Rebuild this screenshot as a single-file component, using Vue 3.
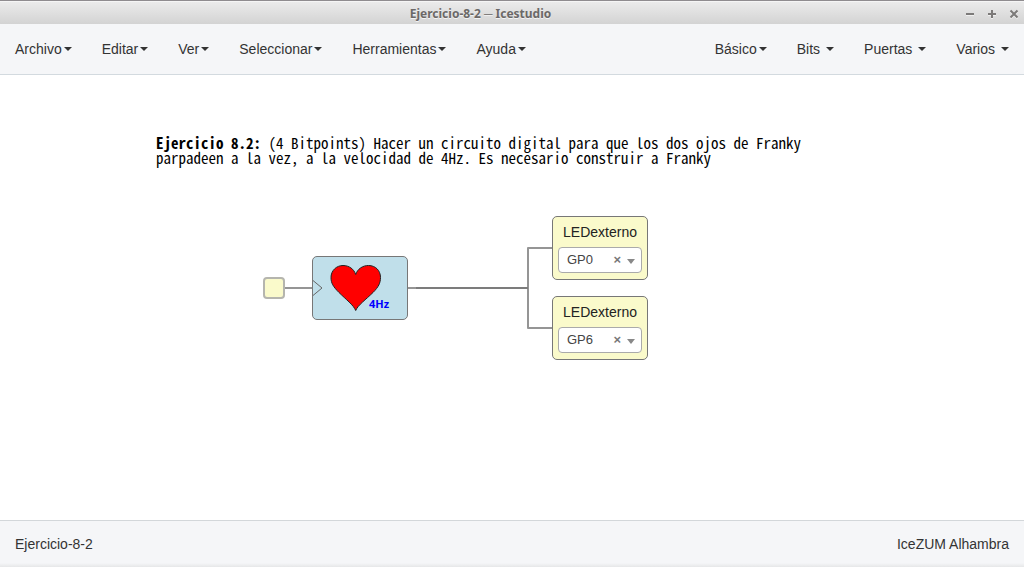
<script setup>
import { reactive } from 'vue'

const leftMenus = ['Archivo', 'Editar', 'Ver', 'Seleccionar', 'Herramientas', 'Ayuda']
const rightMenus = [
  { label: 'Básico', spaced: false },
  { label: 'Bits', spaced: true },
  { label: 'Puertas', spaced: true },
  { label: 'Varios', spaced: true },
]
const pins = ['GP0', 'GP1', 'GP2', 'GP3', 'GP4', 'GP5', 'GP6', 'GP7']
const leds = reactive([
  { id: 'led-a', name: 'LEDexterno', pin: 'GP0' },
  { id: 'led-b', name: 'LEDexterno', pin: 'GP6' },
])
</script>

<template>
  <div class="window">
    <header class="titlebar">
      <h1 class="title">Ejercicio-8-2 ─ Icestudio</h1>
      <div class="controls">
        <button type="button" aria-label="Minimizar">
          <svg viewBox="0 0 10 10"><path d="M1 5H9" /></svg>
        </button>
        <button type="button" aria-label="Maximizar">
          <svg viewBox="0 0 10 10"><path d="M1 5H9M5 1V9" /></svg>
        </button>
        <button type="button" aria-label="Cerrar">
          <svg viewBox="0 0 10 10"><path d="M1.5 1.5L8.5 8.5M8.5 1.5L1.5 8.5" /></svg>
        </button>
      </div>
    </header>

    <nav class="navbar">
      <div class="menus">
        <button v-for="m in leftMenus" :key="m" type="button" class="menu">
          {{ m }}<span class="caret"></span>
        </button>
      </div>
      <div class="menus">
        <button v-for="m in rightMenus" :key="m.label" type="button" class="menu" :class="{ spaced: m.spaced }">
          {{ m.label }}<span class="caret"></span>
        </button>
      </div>
    </nav>

    <main class="canvas">
      <p class="note">
        <b>Ejercicio 8.2:</b> (4 Bitpoints) Hacer un circuito digital para que los dos ojos de Franky<br />
        parpadeen a la vez, a la velocidad de 4Hz. Es necesario construir a Franky
      </p>

      <svg class="wires" width="400" height="160" viewBox="0 0 400 160" aria-hidden="true">
        <path class="wire" d="M29 73H60M148 73H272M272 73V33H304M272 73V113H304" />
        <path class="wire trunk" d="M160 73H272" />
      </svg>

      <div class="port"></div>

      <div class="heart-block">
        <svg width="94" height="62" viewBox="0 0 94 62" aria-label="Corazón 4Hz">
          <path class="clock" d="M0 23.5L9 31L0 38.5" />
          <path
            class="heart"
            d="M42.7 53.5C40.5 48 33 42.500 26 35.500C20 29.500 18 26 18 20.500C18 13.500 23.500 8.500 30 8.500C36 8.500 41 12 42.700 17.500C44.500 12 49.500 8.500 55.500 8.500C62.500 8.500 67.500 13.500 67.500 20.500C67.500 26 65.500 30 60 35.500C53 42.500 45 48 42.700 53.500Z"
          />
          <text x="56" y="51">4Hz</text>
        </svg>
      </div>

      <section v-for="led in leds" :key="led.id" class="led" :class="led.id">
        <label :for="led.id">{{ led.name }}</label>
        <div class="picker">
          <select :id="led.id" v-model="led.pin">
            <option v-for="p in pins" :key="p">{{ p }}</option>
          </select>
          <button type="button" class="clear" aria-label="Borrar" @click="led.pin = ''">×</button>
          <span class="arrow"></span>
        </div>
      </section>
    </main>

    <footer class="status">
      <span>Ejercicio-8-2</span>
      <span>IceZUM Alhambra</span>
    </footer>
  </div>
</template>

<style>
body {
  margin: 0;
}
</style>

<style scoped>
.window {
  display: flex;
  flex-direction: column;
  min-height: 100vh;
  background: #fff;
  color: #333;
  font: 14px/20px "Liberation Sans", Arial, sans-serif;
}
button {
  margin: 0;
  padding: 0;
  border: 0;
  background: none;
  color: inherit;
  font: inherit;
}
.titlebar {
  display: flex;
  align-items: center;
  gap: 4px;
  box-sizing: border-box;
  height: 24px;
  padding: 2px 5px 0 0;
  border-top: 1px solid #8f8c8f;
  background: linear-gradient(#ececec, #d3d3d3);
  box-shadow: inset 0 1px #f5f5f5;
}
.title {
  flex: 1;
  margin: 0;
  color: #6b6867;
  font: bold 12px/20px "Noto Sans", "Open Sans", sans-serif;
  text-align: center;
  text-shadow: 0 1px #f3f3f3;
}
.controls {
  display: flex;
  gap: 12px;
}
.controls button {
  display: flex;
}
.controls svg {
  width: 10px;
  height: 10px;
  fill: none;
  stroke: #7c7a79;
  stroke-width: 2;
  filter: drop-shadow(0 1px #f0f0f0);
}
.navbar {
  display: flex;
  justify-content: space-between;
  height: 50px;
  border-bottom: 1px solid #d3dadf;
  background: #f5f6f8;
}
.menus {
  display: flex;
}
.menu {
  display: flex;
  align-items: center;
  padding: 0 15px;
}
.caret {
  margin-left: 2px;
  border: 4px solid transparent;
  border-top-color: #333;
  border-bottom: 0;
}
.spaced .caret {
  margin-left: 6px;
}
.canvas {
  position: relative;
  flex: 1;
  min-height: 400px;
}
.note {
  position: absolute;
  left: 156px;
  top: 60px;
  margin: 0;
  color: #000;
  font: 15px/15px "Noto Sans Mono CJK SC", "DejaVu Sans Mono", monospace;
  white-space: nowrap;
}
.wires {
  position: absolute;
  left: 256px;
  top: 140px;
}
.wire {
  fill: none;
  stroke: #959595;
  stroke-width: 2;
  stroke-linejoin: round;
}
.trunk {
  stroke: #7c7c7c;
}
.port,
.heart-block,
.led {
  position: absolute;
  box-sizing: border-box;
  border: 1px solid #777;
  border-radius: 5px;
  background: #fafacb;
}
.port {
  left: 263px;
  top: 202px;
  width: 22px;
  height: 22px;
  border: 2px solid #b5b5ae;
  border-radius: 4px;
}
.heart-block {
  left: 312px;
  top: 181px;
  width: 96px;
  height: 64px;
  background: #c0dfea;
}
.heart-block svg {
  display: block;
}
.clock {
  fill: none;
  stroke: #666;
}
.heart {
  fill: #f00;
  stroke: #222;
}
.heart-block text {
  fill: #00f;
  font: bold 11px "Open Sans", "DejaVu Sans", sans-serif;
}
.led {
  left: 552px;
  width: 96px;
  height: 64px;
  padding: 5px;
  color: #222;
}
.led-a {
  top: 141px;
}
.led-b {
  top: 221px;
}
.led label {
  display: block;
  margin-bottom: 5px;
  text-align: center;
}
.picker {
  position: relative;
}
.picker select {
  appearance: none;
  display: block;
  box-sizing: border-box;
  width: 100%;
  height: 26px;
  padding: 0 8px;
  border: 1px solid #aaa;
  border-radius: 4px;
  background: #fff;
  color: #444;
  font: 13px/24px "Liberation Sans", Arial, sans-serif;
}
.clear {
  position: absolute;
  right: 21px;
  top: 3px;
  color: #777;
  font-size: 13px;
  font-weight: bold;
}
.arrow {
  position: absolute;
  right: 7px;
  top: 12px;
  border: 4px solid transparent;
  border-top: 5px solid #888;
  border-bottom: 0;
}
.status {
  display: flex;
  justify-content: space-between;
  align-items: center;
  box-sizing: border-box;
  height: 47px;
  padding: 0 15px;
  border-top: 1px solid #d3d7da;
  background: linear-gradient(transparent 42px, #e6e7e8) #f5f6f8;
}
</style>
